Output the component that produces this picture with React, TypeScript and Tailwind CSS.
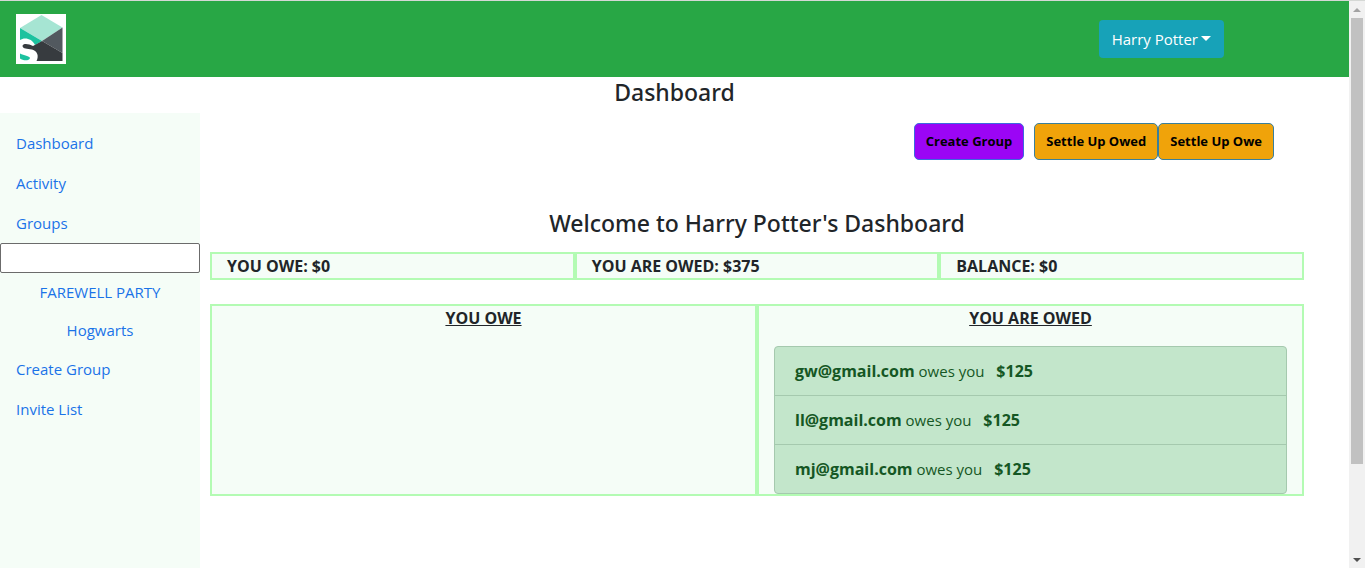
import React from "react";

type Debt = { email: string; amount: string };

const debts: Debt[] = [
  { email: "gw@gmail.com", amount: "$125" },
  { email: "ll@gmail.com", amount: "$125" },
  { email: "mj@gmail.com", amount: "$125" },
];

const totals = ["YOU OWE: $0", "YOU ARE OWED: $375", "BALANCE: $0"];

function Logo() {
  return (
    <svg viewBox="0 0 50 50" className="size-[50px]" role="img" aria-label="Splitwise">
      <rect width="50" height="50" fill="#fff" />
      <path d="M25.500 1 46.500 13.500 26 27 4 14Z" fill="#a6e5d3" />
      <path d="M4 14 26 27 19 31C16 24 8 23 4 26Z" fill="#1cc29f" />
      <path d="M46.500 13.500V39L26 27Z" fill="#52595f" />
      <path
        d="M26 27 46.500 39V47H20.500C23 42 21.500 37 16 35.500 11 34.500 7 35 6.500 32 7 29 13 30 17 32Z"
        fill="#373b3f"
      />
      <path d="M4 39.500C8 41.500 13.500 42 14 44 13.500 47 7 47 4 44.500Z" fill="#1cc29f" />
    </svg>
  );
}

function NavLink({ children }: { children: React.ReactNode }) {
  return (
    <a href="#" className="px-4 py-2 leading-6">
      {children}
    </a>
  );
}

function GroupLink({ children }: { children: React.ReactNode }) {
  return (
    <a href="#" className="py-[7px] text-center leading-6">
      {children}
    </a>
  );
}

function Scrollbar() {
  return (
    <div aria-hidden="true" className="flex w-4 shrink-0 flex-col bg-[#f1f1f1] px-0.5">
      <div className="flex h-[17px] items-center justify-center">
        <svg viewBox="0 0 8 4" className="h-1 w-2">
          <path d="M0 4 4 0 8 4Z" fill="#a3a3a3" />
        </svg>
      </div>
      <div className="flex-[446] bg-[#c1c1c1]" />
      <div className="flex-[87]" />
      <div className="flex h-[17px] items-center justify-center">
        <svg viewBox="0 0 8 4" className="h-1 w-2">
          <path d="M0 0 4 4 8 0Z" fill="#505050" />
        </svg>
      </div>
    </div>
  );
}

export default function App() {
  return (
    <div className="flex min-h-screen border-t border-[#d5d8d5] bg-white font-['Open_Sans','Noto_Sans',sans-serif] text-[15px] text-[#212529]">
      <div className="flex min-w-0 flex-1 flex-col">
        <header className="flex h-[76px] items-center justify-between bg-[#28a745] pr-[125px] pl-4">
          <a href="#">
            <Logo />
          </a>
          <button
            type="button"
            className="flex h-[38px] items-center gap-[3px] rounded-sm bg-[#17a2b8] px-[13px] text-white"
          >
            Harry Potter
            <svg viewBox="0 0 10 5" className="mb-0.5 h-[5px] w-2.5">
              <path d="M0 0H10L5 5Z" fill="currentColor" />
            </svg>
          </button>
        </header>

        <h1 className="pt-px pb-[7px] text-center font-['Noto_Sans','Open_Sans',sans-serif] text-[23px] leading-7 font-medium">
          Dashboard
        </h1>

        <div className="flex flex-1">
          <nav className="flex w-[200px] shrink-0 flex-col bg-[#f5fdf7] pt-[10px] text-[#1a73e8]">
            <NavLink>Dashboard</NavLink>
            <NavLink>Activity</NavLink>
            <NavLink>Groups</NavLink>
            <input
              type="text"
              aria-label="Search groups"
              className="h-[30px] w-full rounded-xs border border-[#6b6b6b] bg-white px-1 text-black"
            />
            <GroupLink>FAREWELL PARTY</GroupLink>
            <GroupLink>Hogwarts</GroupLink>
            <NavLink>Create Group</NavLink>
            <NavLink>Invite List</NavLink>
          </nav>

          <main className="min-w-0 flex-1 pt-[10px] pr-[45px] pl-[10px]">
            <div className="flex justify-end pr-[30px] text-[13px] font-bold text-black">
              <button
                type="button"
                className="mr-[10px] h-[37px] rounded-[5px] border border-[#3c69e0] bg-[#9b05f5] px-[11px]"
              >
                Create Group
              </button>
              <button
                type="button"
                className="h-[37px] rounded-[5px] border border-[#3a7f9c] bg-[#f0a30a] px-[11px]"
              >
                Settle Up Owed
              </button>
              <button
                type="button"
                className="h-[37px] rounded-[5px] border border-[#3a7f9c] bg-[#f0a30a] px-[11px]"
              >
                Settle Up Owe
              </button>
            </div>

            <h2 className="mt-[49px] mb-[15px] text-center font-['Noto_Sans','Open_Sans',sans-serif] text-[23px] leading-7 font-medium">
              Welcome to Harry Potter's Dashboard
            </h2>

            <div className="grid grid-cols-3 text-base leading-6 font-bold">
              {totals.map((total) => (
                <div key={total} className="border-2 border-[#b3fbb3] bg-[#f5fdf7] px-[15px]">
                  {total}
                </div>
              ))}
            </div>

            <div className="mt-6 grid grid-cols-2">
              <section className="border-2 border-[#b3fbb3] bg-[#f5fdf7] px-[15px]">
                <h3 className="text-center text-base leading-6 font-bold underline">YOU OWE</h3>
              </section>
              <section className="border-2 border-[#b3fbb3] bg-[#f5fdf7] px-[15px]">
                <h3 className="mb-4 text-center text-base leading-6 font-bold underline">
                  YOU ARE OWED
                </h3>
                <ul className="divide-y divide-[#a5c9ae] rounded-sm border border-[#a5c9ae] bg-[#c3e6cb] text-[#155724]">
                  {debts.map((debt) => (
                    <li key={debt.email} className="px-5 py-3 leading-6">
                      <b className="text-base leading-6">{debt.email}</b> owes you{" "}
                      <b className="ml-2 text-base leading-6">{debt.amount}</b>
                    </li>
                  ))}
                </ul>
              </section>
            </div>
          </main>
        </div>
      </div>
      <Scrollbar />
    </div>
  );
}
